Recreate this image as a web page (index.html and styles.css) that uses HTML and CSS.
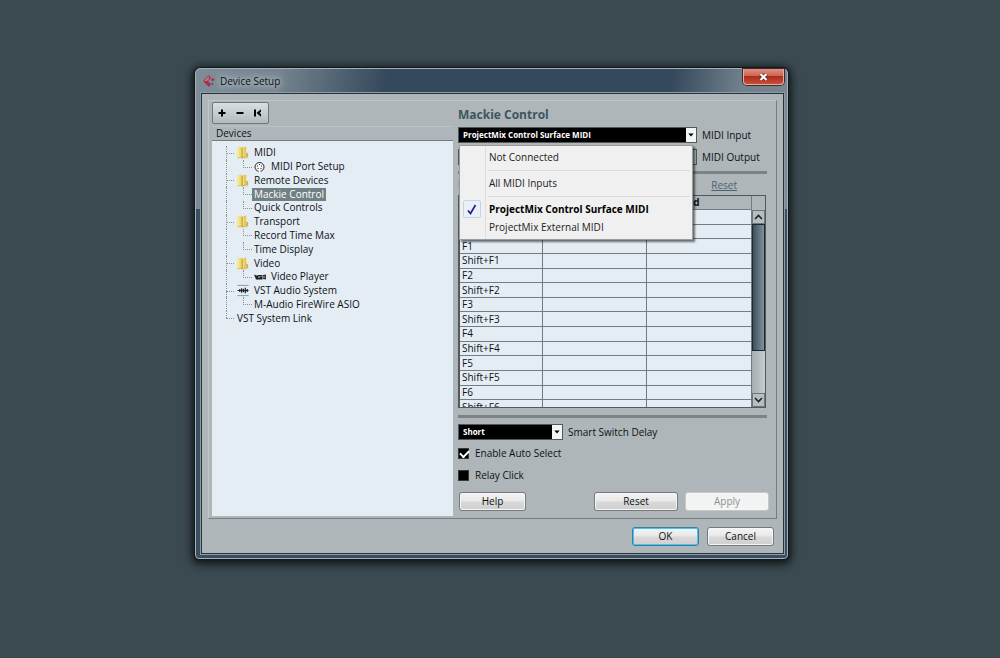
FILE: index.html
```html
<!DOCTYPE html>
<html lang="en">
<head>
<meta charset="utf-8">
<title>Device Setup</title>
<link rel="stylesheet" href="styles.css">
</head>
<body>
<main class="window">
  <header class="titlebar">
    <svg class="app-icon" width="12" height="14" viewBox="0 0 12 14" aria-hidden="true">
      <path d="M0 7 6 1 8 4 5 7 8 10 6 13Z" fill="#a8304a"/>
      <path d="M1 7 6 2 6 5 4 7Z" fill="#d76a80"/>
      <path d="M8 6 9 4 12 5 10 7.500Z" fill="#a03850"/>
      <path d="M8 10 10 9 10 11Z" fill="#8a2038"/>
    </svg>
    <h1 class="caption">Device Setup</h1>
    <button class="close" type="button" aria-label="Close">
      <svg width="9" height="8" viewBox="0 0 9 8"><path d="M1.500 1 7.500 7M7.500 1 1.500 7" stroke="#5a2a28" stroke-width="3.600"/><path d="M1.500 1 7.500 7M7.500 1 1.500 7" stroke="#fff" stroke-width="2.200"/></svg>
    </button>
  </header>
  <div class="client">
    <div class="panel">
      <section class="devices">
        <div class="toolbar">
          <button type="button" aria-label="Add"><svg width="8" height="8" viewBox="0 0 8 8"><path d="M4 .5v7M.5 4h7" stroke="#000" stroke-width="2"/></svg></button>
          <button type="button" aria-label="Remove"><svg width="8" height="8" viewBox="0 0 8 8"><path d="M.5 4h7" stroke="#000" stroke-width="2"/></svg></button>
          <button type="button" aria-label="Reset device"><svg width="8" height="8" viewBox="0 0 8 8"><path d="M1 .5v7" stroke="#000" stroke-width="2"/><path d="M2.500 4 7 .3v7.400Z" fill="#000"/><path d="M7 2.800v2.400L5.500 4Z" fill="#c4cace"/></svg></button>
        </div>
        <h2 class="list-title">Devices</h2>
        <div class="tree-box">
          <ul class="tree">
            <li class="top"><svg class="folder"><use href="#folder"/></svg><span>MIDI</span></li>
            <li class="sub last"><svg class="small" viewBox="0 0 12 12"><circle cx="5.500" cy="6" r="4.500" fill="#f5f7f8" stroke="#222"/><path d="M3 5h1M7 5h1M5 3.500h1M3.500 7.500h1M6.500 7.500h1" stroke="#222"/><path d="M4.500 10.500h2" stroke="#fff"/></svg><span>MIDI Port Setup</span></li>
            <li class="top"><svg class="folder"><use href="#folder"/></svg><span>Remote Devices</span></li>
            <li class="sub"><span class="selected">Mackie Control</span></li>
            <li class="sub last"><span>Quick Controls</span></li>
            <li class="top"><svg class="folder"><use href="#folder"/></svg><span>Transport</span></li>
            <li class="sub"><span>Record Time Max</span></li>
            <li class="sub last"><span>Time Display</span></li>
            <li class="top"><svg class="folder"><use href="#folder"/></svg><span>Video</span></li>
            <li class="sub last"><svg class="small" viewBox="0 0 12 12"><path d="M0 3.500 4 5v3.500H2Z" fill="#222"/><path d="M3.500 4h5v4.500h-5Z" fill="#222"/><path d="M9 4l3-.5v5L9 8Z" fill="#333"/><circle cx="5" cy="6" r=".8" fill="#ddd"/><path d="M6.500 5.500h1M10 5v2" stroke="#ddd" stroke-width=".8"/></svg><span>Video Player</span></li>
            <li class="top"><svg class="folder" viewBox="0 0 12 14"><path d="M0 1.500h12M0 12.500h12" stroke="#8b9398"/><path d="M0 7h12" stroke="#222"/><path d="M2.500 5.500v3M4.500 4.500v5M6.500 5v4M8.500 4v6M10.500 5.500v3" stroke="#222" stroke-width="1.300"/></svg><span>VST Audio System</span></li>
            <li class="sub last"><span>M-Audio FireWire ASIO</span></li>
            <li class="top end"><span>VST System Link</span></li>
          </ul>
        </div>
      </section>
      <section class="settings">
        <h2 class="page-title">Mackie Control</h2>
        <div class="port">
          <div class="combo">
            <select id="midi-in"><option>ProjectMix Control Surface MIDI</option></select>
            <svg class="arrow" viewBox="0 0 9 13" aria-hidden="true"><use href="#down"/></svg>
            <div class="menu" role="menu">
              <button type="button" role="menuitem">Not Connected</button>
              <hr>
              <button type="button" role="menuitem">All MIDI Inputs</button>
              <hr>
              <button type="button" role="menuitem" class="current"><span class="tick"><svg width="10" height="11" viewBox="0 0 10 11"><path d="M1 6.500 3.500 9.500 8.500 1" fill="none" stroke="#22228a" stroke-width="1.700"/></svg></span>ProjectMix Control Surface MIDI</button>
              <button type="button" role="menuitem">ProjectMix External MIDI</button>
            </div>
          </div>
          <label for="midi-in">MIDI Input</label>
        </div>
        <div class="port">
          <div class="combo">
            <select id="midi-out" class="plain"><option>Not Connected</option></select>
          </div>
          <label for="midi-out">MIDI Output</label>
        </div>
        <hr class="divider">
        <div class="assign"><span>User Assignments</span><a href="#reset">Reset</a></div>
        <div class="grid">
          <div class="grid-view">
            <table>
              <colgroup><col class="c1"><col class="c2"><col></colgroup>
              <thead><tr><th>Button</th><th>Category</th><th>Command</th></tr></thead>
              <tbody>
                <tr><td>User A</td><td></td><td></td></tr>
                <tr><td>User B</td><td></td><td></td></tr>
                <tr><td>F1</td><td></td><td></td></tr>
                <tr><td>Shift+F1</td><td></td><td></td></tr>
                <tr><td>F2</td><td></td><td></td></tr>
                <tr><td>Shift+F2</td><td></td><td></td></tr>
                <tr><td>F3</td><td></td><td></td></tr>
                <tr><td>Shift+F3</td><td></td><td></td></tr>
                <tr><td>F4</td><td></td><td></td></tr>
                <tr><td>Shift+F4</td><td></td><td></td></tr>
                <tr><td>F5</td><td></td><td></td></tr>
                <tr><td>Shift+F5</td><td></td><td></td></tr>
                <tr><td>F6</td><td></td><td></td></tr>
                <tr><td>Shift+F6</td><td></td><td></td></tr>
              </tbody>
            </table>
          </div>
          <div class="scroll">
            <button type="button" aria-label="Scroll up"><svg width="9" height="6" viewBox="0 0 9 6"><path d="M1 5 4.500 1.500 8 5" fill="none" stroke="#222" stroke-width="1.600"/></svg></button>
            <div class="track"><div class="thumb"></div></div>
            <button type="button" aria-label="Scroll down"><svg width="9" height="6" viewBox="0 0 9 6"><path d="M1 1 4.500 4.500 8 1" fill="none" stroke="#222" stroke-width="1.600"/></svg></button>
          </div>
        </div>
        <hr class="divider">
        <div class="delay">
          <div class="combo">
            <select id="delay"><option>Short</option></select>
            <svg class="arrow" viewBox="0 0 9 13" aria-hidden="true"><use href="#down"/></svg>
          </div>
          <label for="delay">Smart Switch Delay</label>
        </div>
        <label class="check"><input type="checkbox" checked>Enable Auto Select</label>
        <label class="check"><input type="checkbox">Relay Click</label>
        <div class="actions">
          <button type="button" class="btn help">Help</button>
          <button type="button" class="btn wide">Reset</button>
          <button type="button" class="btn wide" disabled>Apply</button>
        </div>
      </section>
    </div>
    <footer class="footer">
      <button type="button" class="btn default">OK</button>
      <button type="button" class="btn">Cancel</button>
    </footer>
  </div>
</main>
<svg class="defs" width="0" height="0" aria-hidden="true">
  <symbol id="folder" viewBox="0 0 12 14"><path d="M0 2 5 .5v11.500L0 13Z" fill="#f0da68"/><path d="M5 2 9.500 .5V12L5 13.500Z" fill="#e6ca55"/><path d="M0 2 2 1.500v11L0 13Z" fill="#f8ea94"/><path d="M5 2v11.500" stroke="#b4973c"/><path d="M6.500 2.500v9" stroke="#f2e08a"/><path d="M9.500 7 11.500 8v4l-2 .5Z" fill="#cdae48"/><path d="M0 13l5-1 5 1" fill="none" stroke="#c5ad5c" stroke-width=".7"/></symbol>
  <symbol id="down" viewBox="0 0 9 13"><path d="M2 5h5L4.500 8Z" fill="#000"/></symbol>
</svg>
</body>
</html>
```
FILE: styles.css
```css
* { box-sizing: border-box; }

body {
  margin: 0;
  min-height: 100vh;
  padding: 68px 212px 98px 195px;
  background: #3a4a50;
  color: #0e1113;
  font: 10px/14px "Open Sans", "Noto Sans", sans-serif;
}

h1, h2, ul, hr { margin: 0; padding: 0; border: 0; font: inherit; list-style: none; }
button, select, input { margin: 0; padding: 0; font: inherit; color: inherit; }
.defs { position: absolute; }

.window {
  padding: 0 3px 4px 5px;
  border: 1px solid #a4b1bb;
  border-radius: 5px 5px 4px 4px;
  background:
    linear-gradient(100deg, #7e8d98 0, #76858f 80px, #34495c 190px, #34495c 470px, #71808c 540px, #7d8993 100%) top / 100% 140px no-repeat,
    #3b4e5f;
  box-shadow: 0 0 0 1px #10181c, 0 2px 9px 3px rgba(0, 0, 0, .75);
}

.titlebar { display: flex; align-items: center; gap: 5px; height: 24px; padding: 0 0 1px 2px; }
.caption {
  flex: 1;
  text-shadow: 0 0 5px #c4ced4, 0 0 8px #b4c0c8, 0 0 10px #b4c0c8;
}
.close {
  display: grid;
  place-items: center;
  align-self: flex-start;
  width: 41px;
  height: 16px;
  border: 1px solid #dfb0aa;
  border-top: 0;
  border-radius: 0 0 4px 4px;
  background: linear-gradient(#dd9282, #cf6452 45%, #ac2d1d 50%, #c84e38);
  box-shadow: 0 0 0 1px #48282b;
}

.client { padding: 6px 6px 7px; border: 1px solid #26333c; background: #aeb6b9; box-shadow: 0 0 0 1px #8c9ba8; }

.panel {
  display: grid;
  grid-template-columns: 241px minmax(0, 1fr);
  gap: 5px;
  padding: 1px 9px 2px 3px;
  border: 1px solid #c0c7c9;
  border-color: #c0c7c9 #737c80 #737c80 #c0c7c9;
}

.devices { display: flex; flex-direction: column; }
.toolbar {
  display: flex;
  align-self: flex-start;
  height: 22px;
  padding-right: 1px;
  border: 1px solid #6e777b;
  border-radius: 2px;
  background: linear-gradient(#d9dee1, #b4bbbf);
}
.toolbar button { display: grid; place-items: center; width: 18px; border: 0; background: none; }
.list-title { margin-top: 2px; padding: 0 4px; height: 15px; border-top: 1px solid #bcc3c5; border-bottom: 1px solid #737c80; line-height: 13px; }
.tree-box { flex: 1; padding: 5px 0 0 14px; background: #e4ecf4; }
.tree { display: grid; grid-template-rows: repeat(13, 1fr); height: 179px; line-height: 13px; }
.tree li { display: flex; align-items: center; position: relative; }
.tree li::before {
  content: "";
  position: absolute;
  top: 0;
  bottom: 0;
  left: 0;
  border-left: 1px dotted #889298;
}
.tree .end::before { bottom: 50%; }
.tree li::after {
  content: "";
  position: absolute;
  top: 0;
  left: 0;
  width: 8px;
  height: 50%;
  border-bottom: 1px dotted #889298;
}
.tree .top { padding-left: 11px; }
.tree .sub { padding-left: 28px; }
.tree .sub::after { left: 17px; border-left: 1px dotted #889298; }
.tree span { white-space: nowrap; }
.folder { width: 12px; height: 13px; margin-right: 5px; }
.small { width: 12px; height: 12px; margin-right: 5px; }
.tree .selected { margin-left: -2px; padding: 0 2px; background: #708083; color: #fff; }

.settings { display: flex; flex-direction: column; padding-bottom: 5px; }
.page-title { margin-top: 2px; height: 23px; color: #3d5561; font-size: 12px; font-weight: 700; line-height: 21px; }
.port, .delay { display: flex; align-items: center; gap: 5px; height: 16px; }
.port + .port { margin-top: 6px; }
.combo { position: relative; width: 239px; height: 16px; }
.delay .combo { width: 105px; }
.combo select {
  display: block;
  appearance: none;
  width: 100%;
  height: 16px;
  padding: 0 4px;
  border: 1px solid #50585c;
  border-radius: 0;
  background: #000;
  color: #fff;
  font-size: 8px;
  font-weight: 700;
}
.combo select.plain { background: #aeb6b9; color: #333; }
.arrow { position: absolute; top: 1px; right: 1px; width: 10px; height: 14px; background: #f2f4f5; pointer-events: none; }

.menu {
  position: absolute;
  z-index: 2;
  top: 18px;
  left: 1px;
  width: 234px;
  padding: 2px 2px 3px;
  border: 1px solid #989c9e;
  background: linear-gradient(90deg, transparent 25px, #dcdfe1 25px, #dcdfe1 26px, transparent 26px) #f0f0f0;
  box-shadow: 2px 2px 2px rgba(0, 0, 0, .55);
}
.menu button { display: block; position: relative; width: 100%; height: 18px; padding: 0 0 0 27px; border: 0; background: none; color: #222; text-align: left; white-space: nowrap; }
.menu hr { height: 1px; margin: 4px 0 3px 26px; background: #dcdcdc; }
.menu .current { color: #000; font-weight: 700; }
.tick { display: grid; place-items: center; position: absolute; top: 0; left: 1px; width: 18px; height: 18px; border: 1px solid #c2d3e8; border-radius: 2px; background: #eaf0f8; }

.divider { flex: none; height: 3px; margin: 7px 0 6px; background: #7c8384; }
.port + .divider { margin: 6px 0 0; }
.assign { display: flex; justify-content: space-between; align-items: center; height: 21px; padding-right: 30px; color: #a04040; }
.assign a { color: #4c6270; }

.grid { display: flex; height: 213px; margin-right: 1px; border: 1px solid #50595d; border-left-width: 2px; background: #e4ecf4; }
.grid-view { flex: 1; overflow: hidden; }
table { width: 100%; height: 219px; border-collapse: collapse; table-layout: fixed; }
.c1 { width: 82px; }
.c2 { width: 104px; }
th, td { padding: 0 2px; border: 1px solid #717c83; border-width: 0 1px 1px 0; font-weight: 400; line-height: 13px; text-align: left; white-space: nowrap; }
th { background: #aeb6b9; font-weight: 700; }
.scroll { display: flex; flex-direction: column; width: 13px; padding-top: 14px; background: #aeb6b9; }
.scroll button { display: grid; place-items: center; height: 14px; border: 1px solid #6b757a; background: #b7bec1; }
.track { flex: 1; background: linear-gradient(90deg, #a4adb0, #c6cccf); }
.thumb { height: 75%; border: 1px solid #1d2930; background: linear-gradient(90deg, #3b505b, #80929b); }

.check { display: flex; align-items: center; gap: 6px; height: 14px; margin-top: 6px; }
.check + .check { margin-top: 8px; }
.check input { appearance: none; width: 11px; height: 11px; border: 1px solid #33393c; background: #000; }
.check input:checked::before { content: ""; display: block; width: 7px; height: 4px; margin: 1px; border: solid #fff; border-width: 0 0 2px 2px; transform: rotate(-45deg); }

.actions { display: flex; gap: 7px; margin: 10px -2px 0 0; padding-left: 1px; }
.help { margin-right: auto; }
.btn { width: 67px; height: 19px; border: 1px solid #737a7d; border-radius: 3px; background: linear-gradient(#f4f4f4, #e8e8e8 48%, #d8d8d8 52%, #d0d0d0); box-shadow: inset 0 0 0 1px #f6f6f6; line-height: 15px; }
.wide { width: 84px; }
.btn:disabled { border-color: #c3c8ca; background: #f2f3f3; color: #8d9193; }
.default { border-color: #3a7d9c; box-shadow: inset 0 0 0 1px #4cc4ea; }
.footer { display: flex; justify-content: flex-end; gap: 8px; padding: 8px 3px 0; }
```
